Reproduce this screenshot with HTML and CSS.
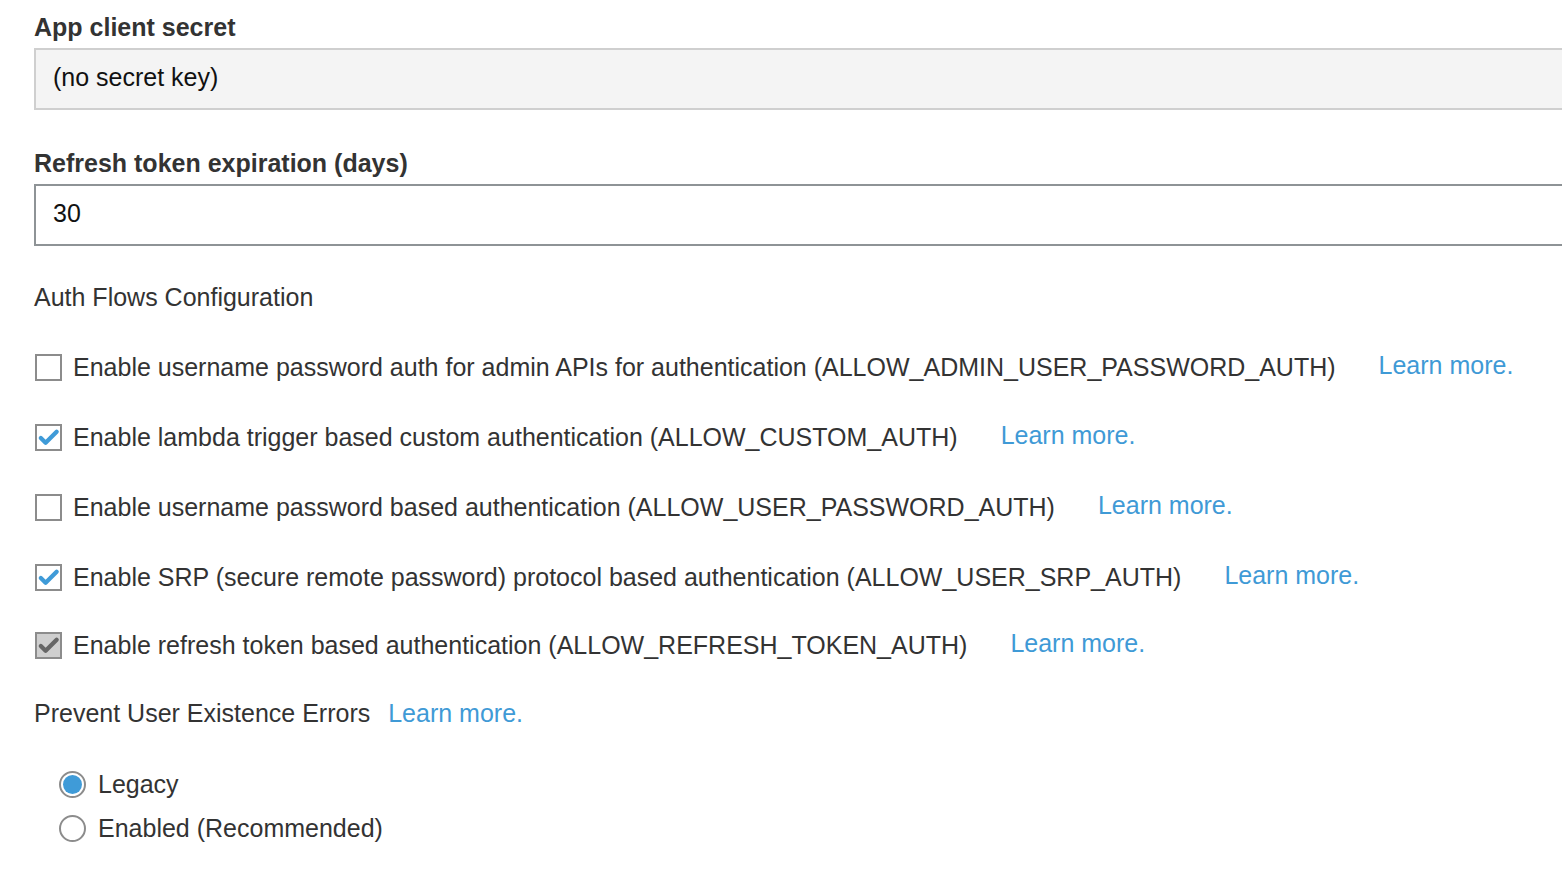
FILE: index.html
```html
<!DOCTYPE html>
<html>
<head>
<meta charset="utf-8">
<link rel="stylesheet" href="styles.css">
</head>
<body>
<div class="page">
  <div class="field">
    <div class="label">App client secret</div>
    <div class="input readonly">(no secret key)</div>
  </div>
  <div class="field last-field">
    <div class="label">Refresh token expiration (days)</div>
    <div class="input">30</div>
  </div>
  <div class="section-title">Auth Flows Configuration</div>
  <div class="checks">
    <div class="check-row">
      <span class="box"></span>
      <span class="check-text">Enable username password auth for admin APIs for authentication (ALLOW_ADMIN_USER_PASSWORD_AUTH)</span>
      <a class="link">Learn more.</a>
    </div>
    <div class="check-row">
      <span class="box checked"><svg viewBox="0 0 24 24"><path d="M4 12.5l5 5L20.5 6" /></svg></span>
      <span class="check-text">Enable lambda trigger based custom authentication (ALLOW_CUSTOM_AUTH)</span>
      <a class="link">Learn more.</a>
    </div>
    <div class="check-row">
      <span class="box"></span>
      <span class="check-text">Enable username password based authentication (ALLOW_USER_PASSWORD_AUTH)</span>
      <a class="link">Learn more.</a>
    </div>
    <div class="check-row">
      <span class="box checked"><svg viewBox="0 0 24 24"><path d="M4 12.5l5 5L20.5 6" /></svg></span>
      <span class="check-text">Enable SRP (secure remote password) protocol based authentication (ALLOW_USER_SRP_AUTH)</span>
      <a class="link">Learn more.</a>
    </div>
    <div class="check-row last">
      <span class="box checked disabled"><svg viewBox="0 0 24 24"><path d="M4 12.5l5 5L20.5 6" /></svg></span>
      <span class="check-text">Enable refresh token based authentication (ALLOW_REFRESH_TOKEN_AUTH)</span>
      <a class="link">Learn more.</a>
    </div>
  </div>
  <div class="prevent">
    <span>Prevent User Existence Errors</span>
    <a class="link">Learn more.</a>
  </div>
  <div class="radios">
    <div class="radio-row"><span class="radio on"></span><span>Legacy</span></div>
    <div class="radio-row"><span class="radio"></span><span>Enabled (Recommended)</span></div>
  </div>
</div>
</body>
</html>
```
FILE: styles.css
```css
html, body {
  margin: 0;
  padding: 0;
  background: #fff;
}
body {
  font-family: "Liberation Sans", Arial, sans-serif;
  color: #333;
  font-size: 25px;
  overflow: hidden;
}
.page {
  padding: 12px 0 0 34px;
}
.field {
  margin-bottom: 38px;
}
.field.last-field {
  margin-bottom: 36px;
}
.label {
  font-weight: bold;
  line-height: 30px;
  margin-bottom: 6px;
  color: #333;
}
.input {
  box-sizing: border-box;
  height: 62px;
  width: 1600px;
  border: 2px solid #8e9396;
  padding: 0 17px 4px;
  line-height: 54px;
  color: #111;
  background: #fff;
}
.input.readonly {
  background: #f4f4f4;
  border-color: #cfcfcf;
}
.section-title {
  line-height: 30px;
}
.checks {
  margin-top: 41px;
  display: flex;
  flex-direction: column;
  gap: 42px;
}
.check-row {
  display: flex;
  align-items: center;
  height: 28px;
}
.check-row.last {
  margin-top: -2px;
}
.box {
  box-sizing: border-box;
  width: 27px;
  height: 27px;
  border: 2px solid #8c8c8c;
  background: #fff;
  margin-left: 1px;
  margin-right: 11px;
  flex: none;
  display: flex;
  align-items: center;
  justify-content: center;
}
.box svg {
  width: 23px;
  height: 23px;
  fill: none;
  stroke: #3f9bd8;
  stroke-width: 4.5;
  stroke-linecap: round;
  stroke-linejoin: round;
}
.box.disabled {
  background: #cfcfcf;
}
.box.disabled svg {
  stroke: #666;
}
.check-text {
  color: #333;
}
.link {
  color: #3f9ad6;
  margin-left: 43px;
  position: relative;
  top: -2px;
}
.prevent {
  margin-top: 39px;
  line-height: 30px;
  display: flex;
}
.prevent .link {
  margin-left: 18px;
  top: 0;
}
.radios {
  margin-top: 42px;
  padding-left: 25px;
  display: flex;
  flex-direction: column;
  gap: 16px;
}
.radio-row {
  display: flex;
  align-items: center;
  height: 28px;
}
.radio {
  box-sizing: border-box;
  width: 27px;
  height: 27px;
  border-radius: 50%;
  border: 2px solid #8c8c8c;
  margin-right: 12px;
  background: #fff;
  flex: none;
  position: relative;
}
.radio.on::after {
  content: "";
  position: absolute;
  left: 2px;
  top: 2px;
  width: 19px;
  height: 19px;
  border-radius: 50%;
  background: #3f9bd8;
}
```
